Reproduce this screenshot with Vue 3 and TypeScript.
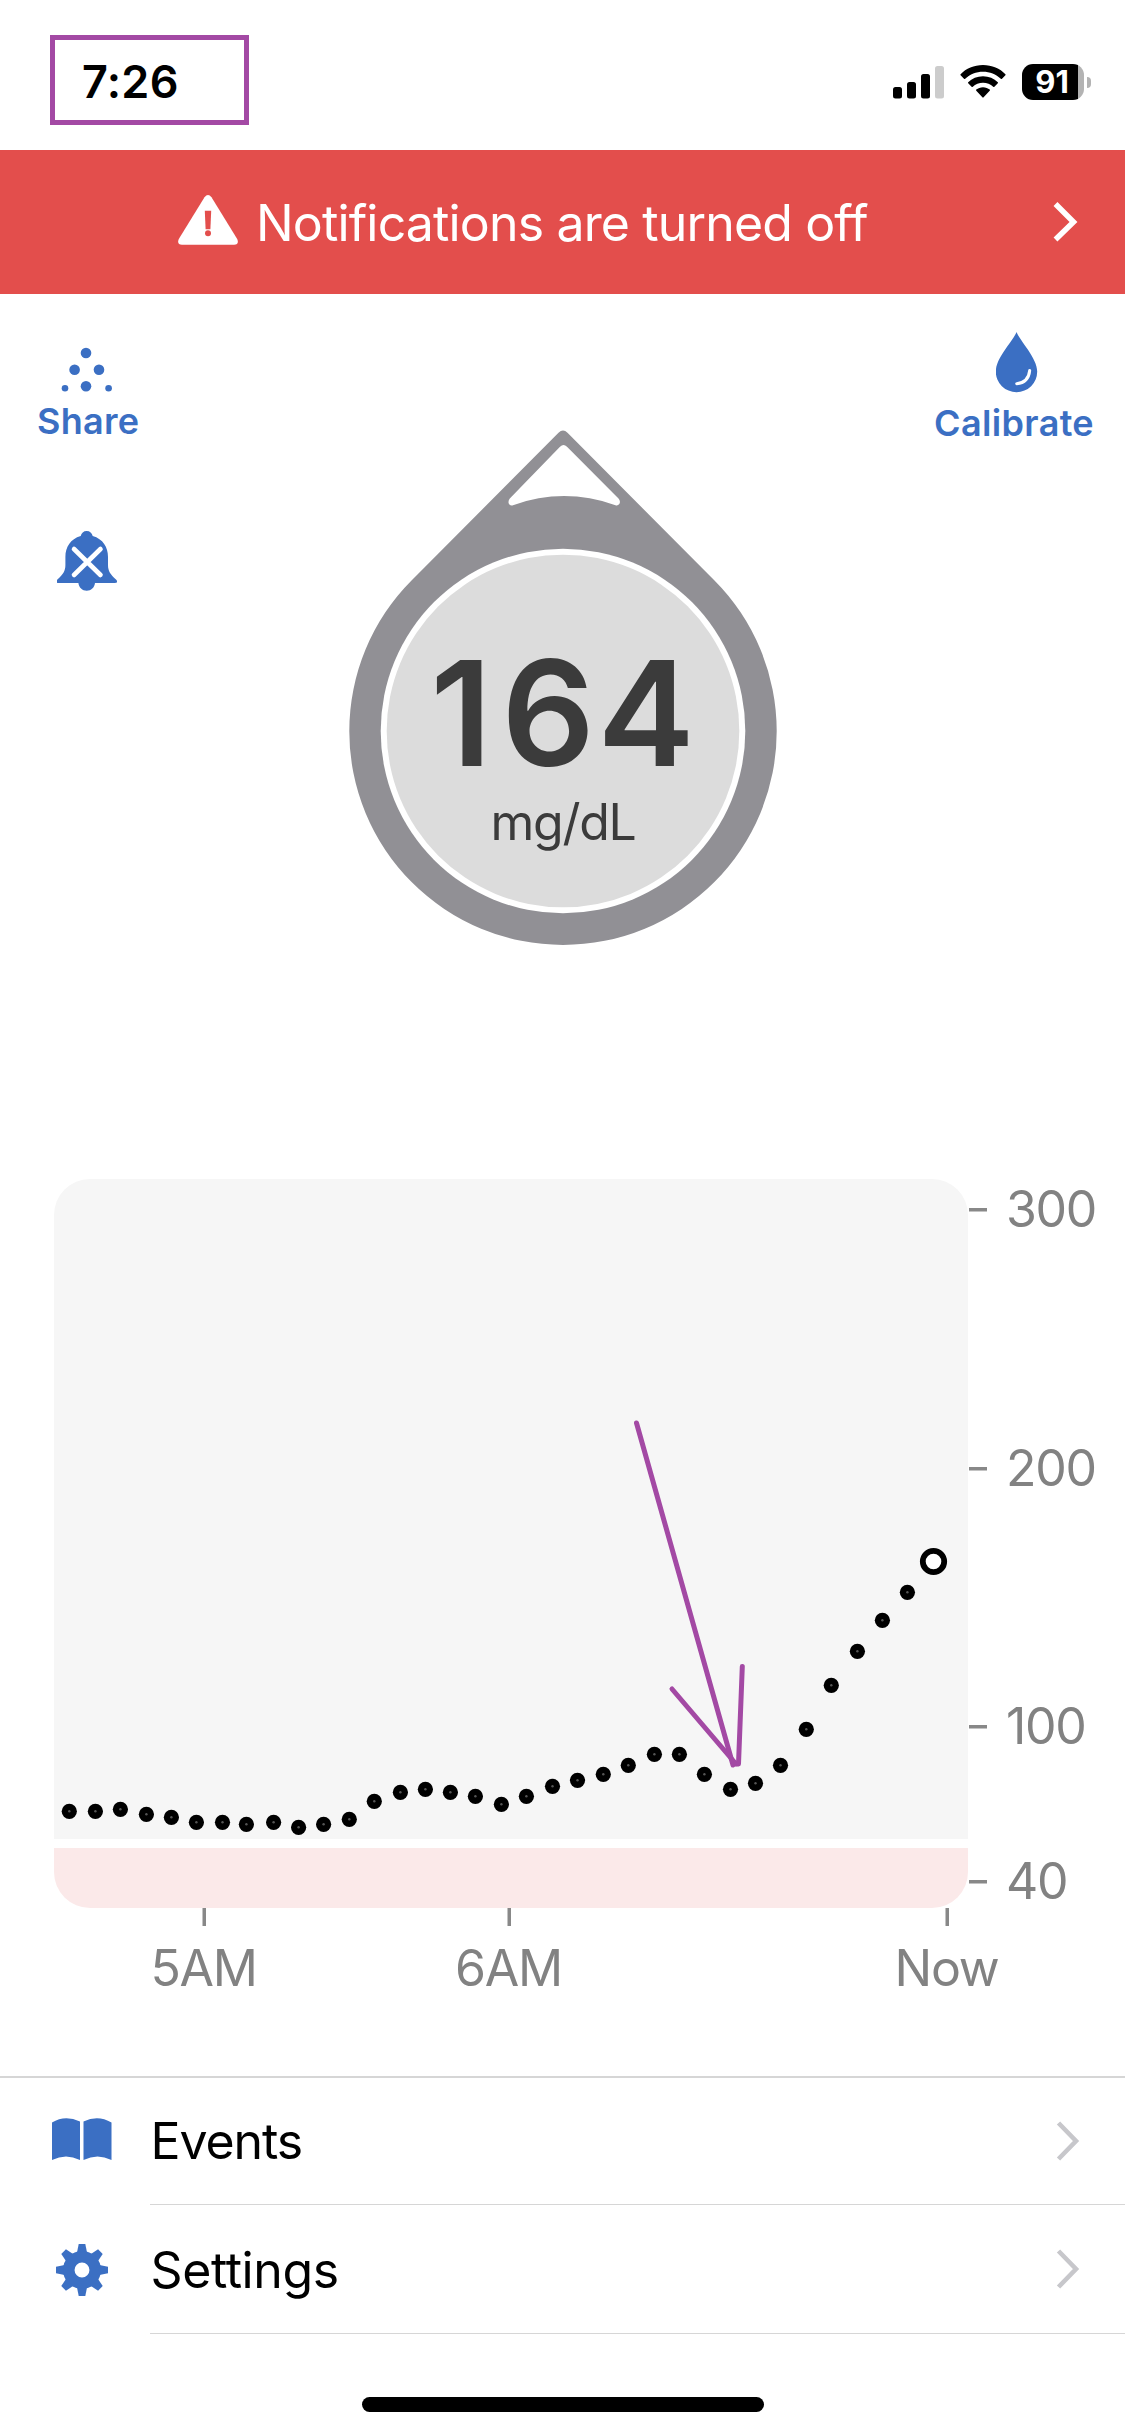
<script setup lang="ts">
interface Reading {
  x: number
  y: number
}

interface AxisTick {
  label: string
  at: number
}

interface MenuRow {
  id: 'events' | 'settings'
  label: string
}

const readings: Reading[] = [
  [69.3, 1811.3], [95.4, 1811.3], [120.4, 1809.3], [146.4, 1814.3], [171.4, 1817.3],
  [196.4, 1822.3], [222.5, 1822.3], [246.4, 1824.3], [273.6, 1822.3], [298.6, 1827.3],
  [323.6, 1824.3], [349.3, 1819.3], [374.3, 1801.3], [400.4, 1792.3], [425.4, 1789.3],
  [450.4, 1792.3], [475.4, 1796.3], [501.4, 1804.3], [526.4, 1796.3], [552.5, 1786.3],
  [577.5, 1780.3], [603.3, 1774.3], [628.3, 1765.3], [654.4, 1754.3], [679.4, 1754.3],
  [704.4, 1774.3], [730.5, 1789.3], [755.5, 1783.3], [780.5, 1765.3], [806.3, 1729.3],
  [831.3, 1685.3], [857.4, 1651.3], [882.4, 1620.3], [907.4, 1592.3],
].map(([x, y]) => ({ x, y }))

const latest: Reading = { x: 933.5, y: 1561.5 }

const levels: AxisTick[] = [
  { label: '300', at: 1210 },
  { label: '200', at: 1469 },
  { label: '100', at: 1727 },
  { label: '40', at: 1882 },
]

const hours: AxisTick[] = [
  { label: '5AM', at: 204 },
  { label: '6AM', at: 509 },
  { label: 'Now', at: 947 },
]

const rows: MenuRow[] = [
  { id: 'events', label: 'Events' },
  { id: 'settings', label: 'Settings' },
]

const teeth = [0, 45, 90, 135, 180, 225, 270, 315]
</script>

<template>
  <main class="screen">
    <header class="status">
      <div class="time-box"><span class="time">7:26</span></div>
      <div class="indicators">
        <svg class="signal" width="51" height="36" viewBox="0 0 51 36">
          <rect x="0" y="23" width="9" height="11.5" rx="2.5" />
          <rect x="14" y="18" width="9" height="16.5" rx="2.5" />
          <rect x="28" y="10" width="9" height="24.5" rx="2.5" />
          <rect x="42" y="2" width="9" height="32.5" rx="2.5" fill="#cccccc" />
        </svg>
        <svg class="wifi" width="46" height="36" viewBox="0 0 46 36">
          <path d="M23 1C14 1 6 4.500 .6 10.200a.8.8 0 0 0 0 1.100L4 14.700a.9.9 0 0 0 1.200 0C10 10.200 16.200 7.700 23 7.700S36 10.200 40.800 14.700a.9.9 0 0 0 1.200 0l3.400-3.400a.8.8 0 0 0 0-1.100C40 4.500 32 1 23 1z" />
          <path d="M23 12.300c-5.800 0-11 2.200-14.800 5.900a.8.8 0 0 0 0 1.100l3.400 3.400a.9.9 0 0 0 1.200 0C15.500 20.200 19 18.800 23 18.800s7.500 1.400 10.200 3.900a.9.9 0 0 0 1.200 0l3.400-3.400a.8.8 0 0 0 0-1.100C34 14.500 28.800 12.300 23 12.300z" />
          <path d="M23 23.200c-2.600 0-5 .9-6.700 2.400a.8.8 0 0 0 0 1.200l6.100 6.500a.8.8 0 0 0 1.200 0l6.100-6.500a.8.8 0 0 0 0-1.200C28 24.100 25.600 23.200 23 23.200z" />
        </svg>
        <div class="battery">
          <div class="cell"><span class="charge">91</span></div>
          <div class="nub"></div>
        </div>
      </div>
    </header>

    <section class="banner">
      <svg class="warn" width="60" height="50" viewBox="0 0 60 50">
        <path d="M26.500 2.200Q30-2 33.500 2.200L59.200 44Q61.500 49.700 56 49.700H4Q-1.500 49.700.8 44z" fill="#fff" />
        <path d="M26.800 15.800h6.400l-.8 18.400h-4.800z" fill="#e34e4c" />
        <circle cx="30" cy="38.300" r="3" fill="#e34e4c" />
      </svg>
      <span class="banner-text">Notifications are turned off</span>
      <svg class="banner-chevron" width="26" height="42" viewBox="0 0 26 42">
        <path d="M3.500 3L21.500 21L3.500 38.500" fill="none" stroke="#fff" stroke-width="5.500" />
      </svg>
    </section>

    <section class="hero">
      <div class="side left">
        <div class="action">
          <svg class="share-icon" width="52" height="46" viewBox="60 347 52 46" fill="#3b6fc3">
            <circle cx="86" cy="353" r="5.300" />
            <circle cx="74.600" cy="369.700" r="5.300" />
            <circle cx="99" cy="369.700" r="5.300" />
            <circle cx="86" cy="386.200" r="5.300" />
            <circle cx="65" cy="388.200" r="3.300" />
            <circle cx="108.600" cy="388.200" r="3.300" />
          </svg>
          <span class="action-label">Share</span>
        </div>
        <svg class="bell" width="60" height="62" viewBox="57 530 60 62">
          <path
            d="M86.700 531c3.300 0 5.200 2 6 5C103 539 108 547 108 557v8c0 6 2.500 9.500 8 14.500 2 2 1 3.500-.8 3.500H95c-.4 4.500-4 7.700-8.300 7.700s-7.900-3.200-8.300-7.700H58.200c-1.800 0-2.800-1.500-.8-3.500 5.500-5 8-8.500 8-14.500v-8c0-10 5-18 15.300-21 .8-3 2.700-5 6-5z"
            fill="#3b6fc3"
          />
          <path d="M74 549l26.500 26M100.500 549L74 575" stroke="#fff" stroke-width="4.600" stroke-linecap="round" />
        </svg>
      </div>

      <svg class="gauge" width="430" height="520" viewBox="348 428 430 520">
        <path
          d="M412 580L558.500 432.800Q563 428.300 567.500 432.800L714 580A213.700 213.700 0 1 1 412 580z"
          fill="#919095"
        />
        <path
          d="M560 446.700Q563.500 443.500 567 446.700L618.500 498.500C621.500 502 619.500 506.300 615.500 505.200Q564 487 513 505.200C509 506.300 507 502 509.800 498.500z"
          fill="#fff"
        />
        <circle cx="563" cy="731" r="182.300" fill="#fff" />
        <circle cx="563" cy="731" r="176.300" fill="#dcdcdc" />
        <text class="glucose" x="565.500" y="766" dx="0 3.500 -3.500" text-anchor="middle">164</text>
        <text class="unit" x="563" y="840" text-anchor="middle">mg/dL</text>
      </svg>

      <div class="side right">
        <div class="action">
          <svg class="drop" width="42" height="61" viewBox="996 332 42 61">
            <path d="M1016.500 332C1020 341 1037.200 358 1037.200 371.500A20.700 20.700 0 0 1 995.800 371.500C995.800 358 1013 341 1016.500 332z" fill="#3b6fc3" />
            <path d="M1016.700 383.700Q1028.500 382.500 1029.700 370.500" fill="none" stroke="#fff" stroke-width="3" stroke-linecap="round" />
          </svg>
          <span class="action-label">Calibrate</span>
        </div>
      </div>
    </section>

    <section class="trend">
      <svg width="1125" height="897" viewBox="0 1179 1125 897">
        <path d="M54 1839V1215a36 36 0 0 1 36-36H932a36 36 0 0 1 36 36V1839z" fill="#f6f6f6" />
        <path d="M54 1848H968V1872a36 36 0 0 1-36 36H90a36 36 0 0 1-36-36z" fill="#fbe9e9" />
        <g v-for="level in levels" :key="level.label">
          <rect x="969" :y="level.at - 2" width="18" height="3.500" fill="#888" />
          <text class="axis" x="1006" :y="level.at + 17">{{ level.label }}</text>
        </g>
        <g v-for="hour in hours" :key="hour.label">
          <rect :x="hour.at - 1.500" y="1908" width="3.500" height="18" fill="#888" />
          <text class="axis" :x="hour.at - 0.500" y="1986" text-anchor="middle">{{ hour.label }}</text>
        </g>
        <g v-for="(reading, i) in readings" :key="i">
          <circle :cx="reading.x" :cy="reading.y" r="7.600" />
          <circle :cx="reading.x" :cy="reading.y" r="1.200" fill="#555" />
        </g>
        <circle :cx="latest.x" :cy="latest.y" r="10.700" fill="#fff" stroke="#000" stroke-width="5.800" />
        <g stroke="#a349a4" stroke-width="5" stroke-linecap="round" fill="none">
          <path d="M636.500 1423L733 1765" />
          <path d="M672 1689L736 1764" />
          <path d="M742.300 1666.500L738.500 1764" />
        </g>
      </svg>
    </section>

    <nav class="menu">
      <div v-for="row in rows" :key="row.id" class="row">
        <div class="row-icon">
          <svg v-if="row.id === 'events'" width="60" height="43" viewBox="0 0 60 43" fill="#3b6fc3">
            <path d="M0 4.500Q13-3.500 28 3.500V42Q14 35 0 42z" />
            <path d="M31.500 3.500Q46-3.500 59.500 4.500V42Q45.500 35 31.500 42z" />
          </svg>
          <svg v-else class="gear" width="54" height="54" viewBox="-27 -27 54 54">
            <path v-for="angle in teeth" :key="angle" d="M-5.500-15L-3.300-26H3.300L5.500-15z" :transform="`rotate(${angle})`" fill="#3b6fc3" />
            <circle r="13.200" fill="none" stroke="#3b6fc3" stroke-width="11.500" />
          </svg>
        </div>
        <div class="row-body">
          <span class="row-label" :class="row.id">{{ row.label }}</span>
          <svg class="row-chevron" width="26" height="42" viewBox="0 0 26 42">
            <path d="M3.500 3L21 21L3.500 39" fill="none" stroke="#c7c7cb" stroke-width="4.600" />
          </svg>
        </div>
      </div>
    </nav>

    <footer class="home"><div class="home-bar"></div></footer>
  </main>
</template>

<style>
body {
  margin: 0;
  background: #fff;
}
</style>

<style scoped>
.screen {
  display: flex;
  flex-direction: column;
  width: 1125px;
  height: 2436px;
  overflow: hidden;
  background: #fff;
  font-family: Inter, "Liberation Sans", sans-serif;
  color: #000;
}

svg {
  display: block;
  flex: none;
}

.status {
  display: flex;
  justify-content: space-between;
  height: 150px;
  box-sizing: border-box;
  padding: 35px 34px 0 50px;
}

.time-box {
  box-sizing: border-box;
  width: 199px;
  height: 90px;
  border: 5px solid #a349a4;
  padding-left: 27px;
}

.time {
  font-size: 45px;
  font-weight: 600;
  letter-spacing: 0.3px;
  line-height: 84px;
}

.indicators {
  display: flex;
  align-items: flex-start;
  margin-top: 29px;
}

.wifi {
  margin-left: 16px;
}

.battery {
  display: flex;
  align-items: center;
  gap: 3px;
  margin-left: 16px;
}

.cell {
  width: 62px;
  height: 36px;
  border-radius: 11px;
  background: linear-gradient(to right, #000 56px, #b3b3b3 56px);
  line-height: 36px;
}

.charge {
  display: block;
  width: 60px;
  text-align: center;
  color: #fff;
  font-size: 31px;
  font-weight: 700;
}

.nub {
  width: 4px;
  height: 11px;
  border-radius: 0 5px 5px 0;
  background: #b3b3b3;
}

.banner {
  display: flex;
  align-items: center;
  height: 144px;
  box-sizing: border-box;
  padding: 0 47px 0 178px;
  background: #e34e4c;
  color: #fff;
}

.warn {
  margin-bottom: 4px;
}

.banner-text {
  margin: 2px 0 0 18px;
  font-size: 50px;
  letter-spacing: -0.85px;
  line-height: 60px;
  white-space: nowrap;
}

.banner-chevron {
  margin-left: auto;
}

.hero {
  display: grid;
  grid-template-columns: 348px 430px 347px;
  height: 885px;
}

.side {
  display: flex;
  flex-direction: column;
}

.left {
  align-items: flex-start;
}

.action {
  display: flex;
  flex-direction: column;
  align-items: center;
}

.left .action {
  margin: 53px 0 0 37px;
}

.share-icon {
  margin-right: 5px;
}

.action-label {
  margin-top: 8px;
  color: #3b6fc3;
  font-size: 36px;
  font-weight: 600;
  letter-spacing: 0.25px;
  line-height: 40px;
}

.bell {
  margin: 89px 0 0 57px;
}

.gauge {
  margin-top: 134px;
}

.glucose {
  fill: #3b3b3b;
  font-size: 146px;
  font-weight: 600;
  letter-spacing: 6px;
}

.unit {
  fill: #3b3b3b;
  font-size: 50px;
  letter-spacing: -1.3px;
}

.right {
  align-items: flex-end;
}

.right .action {
  margin: 38px 31px 0 0;
}

.drop {
  margin-left: 5px;
}

.right .action-label {
  margin-top: 10px;
  letter-spacing: 0.35px;
}

.trend {
  height: 897px;
}

.axis {
  fill: #828282;
  font-size: 50px;
  letter-spacing: -1.3px;
}

.menu {
  border-top: 2px solid #d6d6d6;
}

.row {
  display: flex;
  height: 127px;
}

.row + .row {
  height: 129px;
}

.row-icon {
  display: flex;
  align-items: center;
  justify-content: center;
  width: 100px;
  padding: 0 18px 5px 32px;
}

.row + .row .row-icon {
  padding-bottom: 0;
}

.row-body {
  display: flex;
  flex: 1;
  align-items: center;
  justify-content: space-between;
  box-sizing: border-box;
  padding-right: 44px;
  border-bottom: 1px solid #d6d6d6;
}

.row-label {
  margin-left: 0.5px;
  font-size: 50px;
  line-height: 60px;
}

.events {
  letter-spacing: -1.1px;
}

.settings {
  padding-top: 2px;
  letter-spacing: -0.4px;
}

.home {
  display: flex;
  justify-content: center;
  margin-top: 63px;
}

.home-bar {
  width: 402px;
  height: 15px;
  border-radius: 8px;
  background: #000;
}
</style>
